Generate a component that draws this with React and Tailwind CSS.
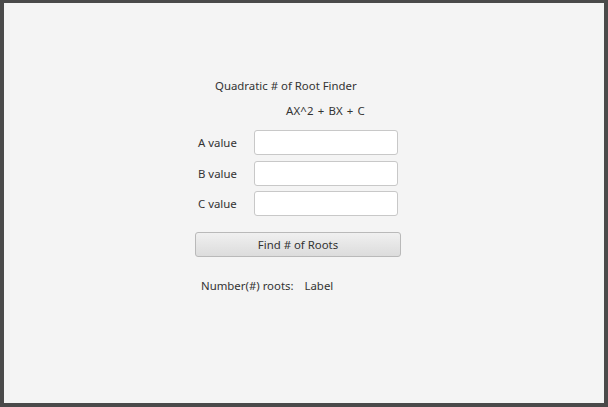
import React from "react";

function ValueRow({ label, className = "" }) {
  return (
    <div className={`flex items-center ${className}`}>
      <span className="w-[59px] pl-[3px] text-[11.4px] text-[#333]">{label}</span>
      <input
        type="text"
        className="h-[25px] w-[144px] rounded-[3px] border border-[#c8c8c8] bg-white px-2 text-[12px] outline-none"
      />
    </div>
  );
}

export default function App() {
  return (
    <div
      className="h-[407px] w-[608px] bg-[#4a4a4a] pl-[4px] pr-[4px] pt-[3px] pb-[4px]"
      style={{ fontFamily: '"Noto Sans", "Open Sans", sans-serif' }}
    >
      <div className="h-full w-full bg-[#f4f4f4]">
        <div className="flex w-[206px] flex-col pl-0 pt-[74px] ml-[191px]">
          <div className="h-[18px] pl-[20px] text-[11.4px] leading-[18px] text-[#333]">
            Quadratic # of Root Finder
          </div>
          <div className="mt-[7px] h-[18px] pl-[91px] text-[11.4px] leading-[18px] tracking-[0.2px] [word-spacing:0.8px] text-[#333]">
            AX^2 + BX + C
          </div>
          <ValueRow label="A value" className="mt-[10px]" />
          <ValueRow label="B value" className="mt-[6px]" />
          <ValueRow label="C value" className="mt-[5px]" />
          <button className="mt-[16px] h-[25px] w-[206px] rounded-[3px] border border-[#b9b9b9] bg-gradient-to-b from-[#f0f0f0] to-[#dcdcdc] text-[11.4px] text-[#333]">
            Find # of Roots
          </button>
          <div className="mt-[20px] flex h-[18px] pl-[6px] text-[11.4px] leading-[18px] text-[#333]">
            <span>Number(#) roots:</span>
            <span className="ml-[11px]">Label</span>
          </div>
        </div>
      </div>
    </div>
  );
}
